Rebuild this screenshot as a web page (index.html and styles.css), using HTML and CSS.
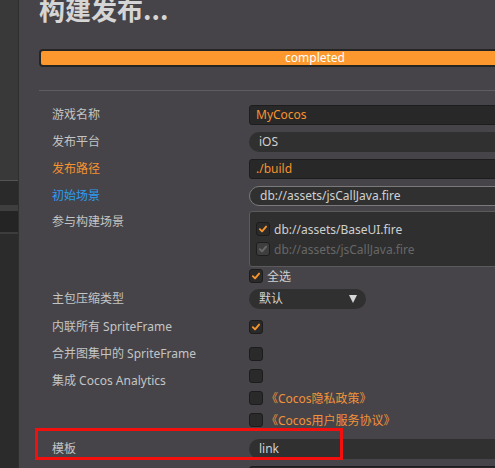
FILE: index.html
```html
<!DOCTYPE html>
<html lang="zh">
<head>
<meta charset="utf-8">
<title>构建发布</title>
<link rel="stylesheet" href="styles.css">
</head>
<body>
<div class="app">
  <aside class="side">
    <div class="band b1"></div>
    <div class="band b2"></div>
    <div class="band b3"></div>
    <div class="band b4"></div>
    <div class="band b5"></div>
    <div class="band b6"></div>
    <div class="band b7"></div>
  </aside>
  <main class="panel">
    <h1 class="title">构建发布...</h1>
    <div class="progress"><span>completed</span></div>
    <div class="sep"></div>
    <div class="form">
      <div class="row">
        <div class="lbl">游戏名称</div>
        <div class="ctl"><div class="input orange">MyCocos</div></div>
      </div>
      <div class="row">
        <div class="lbl">发布平台</div>
        <div class="ctl"><div class="pill">iOS</div></div>
      </div>
      <div class="row">
        <div class="lbl orange">发布路径</div>
        <div class="ctl"><div class="input orange">./build</div></div>
      </div>
      <div class="row">
        <div class="lbl blue">初始场景</div>
        <div class="ctl"><div class="pill asset">db://assets/jsCallJava.fire</div></div>
      </div>
      <div class="row top">
        <div class="lbl pad3">参与构建场景</div>
        <div class="ctl">
          <div class="scenes">
            <div class="citem">
              <span class="cb"><svg viewBox="0 0 14 14"><path d="M3.3 7.2 L5.9 9.8 L10.6 4.2" /></svg></span>
              <span>db://assets/BaseUI.fire</span>
            </div>
            <div class="citem dis">
              <span class="cb"><svg viewBox="0 0 14 14"><path d="M3.3 7.2 L5.9 9.8 L10.6 4.2" /></svg></span>
              <span>db://assets/jsCallJava.fire</span>
            </div>
          </div>
          <div class="citem all">
            <span class="cb"><svg viewBox="0 0 14 14"><path d="M3.3 7.2 L5.9 9.8 L10.6 4.2" /></svg></span>
            <span>全选</span>
          </div>
        </div>
      </div>
      <div class="row r28">
        <div class="lbl">主包压缩类型</div>
        <div class="ctl"><div class="pill select"><span>默认</span><i class="caret"></i></div></div>
      </div>
      <div class="row">
        <div class="lbl">内联所有 SpriteFrame</div>
        <div class="ctl"><span class="cb"><svg viewBox="0 0 14 14"><path d="M3.3 7.2 L5.9 9.8 L10.6 4.2" /></svg></span></div>
      </div>
      <div class="row">
        <div class="lbl">合并图集中的 SpriteFrame</div>
        <div class="ctl"><span class="cb"></span></div>
      </div>
      <div class="row top">
        <div class="lbl pad4">集成 Cocos Analytics</div>
        <div class="ctl stack">
          <div class="citem"><span class="cb"></span></div>
          <div class="citem link"><span class="cb"></span><span>《Cocos隐私政策》</span></div>
          <div class="citem link"><span class="cb"></span><span>《Cocos用户服务协议》</span></div>
        </div>
      </div>
      <div class="row tpl">
        <div class="lbl">模板</div>
        <div class="ctl"><div class="pill">link</div></div>
        <div class="mark"></div>
      </div>
      <div class="row">
        <div class="lbl"></div>
        <div class="ctl"><div class="input"></div></div>
      </div>
    </div>
  </main>
</div>
</body>
</html>
```

FILE: styles.css
```css
html, body {
  margin: 0;
  height: 100%;
  overflow: hidden;
  background: #464448;
}

body {
  font-family: "Noto Sans", "Noto Sans CJK SC", sans-serif;
  font-size: 12px;
  color: #c4c4c4;
}

.app {
  display: flex;
  height: 468px;
}

.side {
  width: 18px;
  flex: none;
  border-right: 1px solid #2f2f2f;
  display: flex;
  flex-direction: column;
}

.band { flex: none; }
.b1 { height: 180px; background: #393939; }
.b2 { height: 1px; background: #555555; }
.b3 { height: 24px; background: #2a2a2a; }
.b4 { height: 6px; background: #3e3e3e; }
.b5 { height: 21px; background: #242424; }
.b6 { height: 2px; background: #3c3c3c; }
.b7 { flex: 1; background: #2b2b2b; }

.panel {
  flex: none;
  width: 600px;
  padding-left: 20px;
}

.title {
  margin: -6px 0 0;
  font: bold 26px/30px "Noto Sans CJK SC", sans-serif;
  color: #d5d5d5;
}

.progress {
  margin-top: 25px;
  width: 552px;
  height: 18px;
  box-sizing: border-box;
  border: 2px solid #252525;
  border-radius: 4px;
  background: #fd982f;
  display: flex;
  align-items: center;
  justify-content: center;
  color: #ffffff;
  line-height: 14px;
}

.sep {
  margin-top: 23px;
  height: 1px;
  background: #5e5d61;
}

.form {
  margin-top: 10px;
}

.row {
  display: flex;
  align-items: center;
  height: 27px;
  position: relative;
}

.row.top {
  align-items: flex-start;
  height: auto;
}

.row.r28 { height: 28px; }

.lbl {
  flex: none;
  width: 197px;
  padding-left: 13px;
  line-height: 20px;
  white-space: nowrap;
}

.lbl.pad3 { padding-top: 3px; }
.lbl.pad4 { padding-top: 4px; }

.orange { color: #f7922f; }
.blue { color: #2a9df4; }

.ctl {
  flex: 1;
  min-width: 0;
}

.input {
  height: 20px;
  box-sizing: border-box;
  border: 1px solid #1d1d1d;
  background: #282828;
  border-radius: 3px;
  padding-left: 6px;
  line-height: 18px;
}

.input.orange { color: #f7922f; }

.pill {
  height: 20px;
  box-sizing: border-box;
  border-radius: 10px;
  background: #303030;
  padding-left: 10px;
  line-height: 20px;
  color: #d0d0d0;
}

.pill.asset {
  border: 1px solid #7a7a7a;
  line-height: 18px;
  padding-left: 10px;
}

.pill.select {
  width: 117px;
  display: flex;
  align-items: center;
  justify-content: space-between;
  padding-right: 9px;
}

.caret {
  width: 0;
  height: 0;
  border-left: 4.5px solid transparent;
  border-right: 4.5px solid transparent;
  border-top: 8px solid #d6d6d6;
}

.scenes {
  margin-top: 2px;
  height: 56px;
  box-sizing: border-box;
  border: 1px solid #5b5b5b;
  border-radius: 3px;
  background: #2f2f2f;
  padding: 7px 0 0 6px;
}

.citem {
  display: flex;
  align-items: center;
  gap: 4px;
  height: 20px;
  color: #cfcfcf;
}

.citem.dis { color: #676767; }
.citem.all { height: 18px; }

.stack {
  display: flex;
  flex-direction: column;
  gap: 4px;
}

.stack .citem { height: 18px; gap: 3px; }

.citem.link { color: #f3923a; }

.cb {
  flex: none;
  display: block;
  width: 14px;
  height: 14px;
  box-sizing: border-box;
  border: 1px solid #1c1c1c;
  border-radius: 3px;
  background: #2a2a2a;
}

.cb svg {
  display: block;
  width: 12px;
  height: 12px;
  fill: none;
  stroke: #f7952c;
  stroke-width: 2.2;
  stroke-linecap: round;
  stroke-linejoin: round;
}

.citem.dis .cb { background: #3e3e3e; border-color: #1e1e1e; }
.citem.dis .cb svg { stroke: #6a6a6a; }

.row.tpl { margin-top: 6px; }

.mark {
  position: absolute;
  left: -4px;
  top: -7px;
  width: 308px;
  height: 32px;
  box-sizing: border-box;
  border: 3px solid #f40f0f;
}
```
